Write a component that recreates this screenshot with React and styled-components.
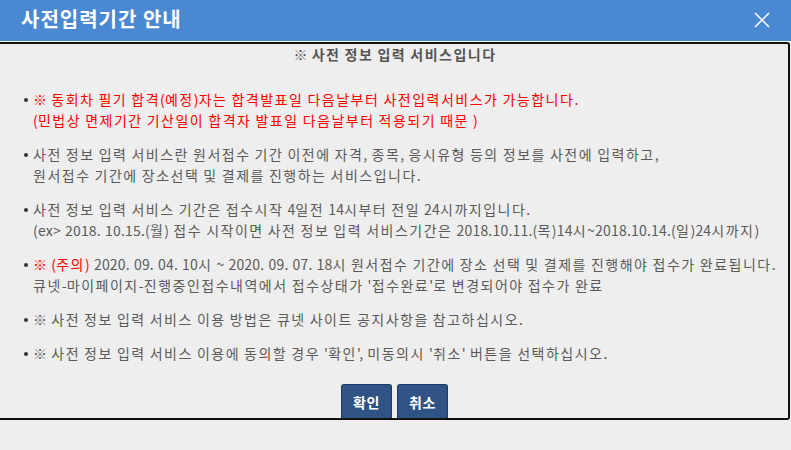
import React from "react";
import styled, { createGlobalStyle } from "styled-components";

const GlobalStyle = createGlobalStyle`
  html, body {
    margin: 0;
    padding: 0;
    background: #eeeeee;
  }
  body {
    font-family: "Noto Sans CJK KR", "Noto Sans", sans-serif;
  }
`;

const notices = [
  [
    [{ text: "※ 동회차 필기 합격(예정)자는 합격발표일 다음날부터 사전입력서비스가 가능합니다.", red: true }],
    [{ text: "(민법상 면제기간 기산일이 합격자 발표일 다음날부터 적용되기 때문 )", red: true }],
  ],
  [
    [{ text: "사전 정보 입력 서비스란 원서접수 기간 이전에 자격, 종목, 응시유형 등의 정보를 사전에 입력하고," }],
    [{ text: "원서접수 기간에 장소선택 및 결제를 진행하는 서비스입니다." }],
  ],
  [
    [{ text: "사전 정보 입력 서비스 기간은 접수시작 4일전 14시부터 전일 24시까지입니다." }],
    [{ text: "(ex> 2018. 10.15.(월) 접수 시작이면 사전 정보 입력 서비스기간은 2018.10.11.(목)14시~2018.10.14.(일)24시까지)" }],
  ],
  [
    [
      { text: "※ (주의)", red: true },
      { text: " 2020. 09. 04. 10시 ~ 2020. 09. 07. 18시 원서접수 기간에 장소 선택 및 결제를 진행해야 접수가 완료됩니다." },
    ],
    [{ text: "큐넷-마이페이지-진행중인접수내역에서 접수상태가 '접수완료'로 변경되어야 접수가 완료" }],
  ],
  [[{ text: "※ 사전 정보 입력 서비스 이용 방법은 큐넷 사이트 공지사항을 참고하십시오." }]],
  [[{ text: "※ 사전 정보 입력 서비스 이용에 동의할 경우 '확인', 미동의시 '취소' 버튼을 선택하십시오." }]],
];

// hangul syllables get a little extra tracking so the lines run as wide as the original
const Spaced = ({ text }) =>
  text.split(/([\uAC00-\uD7A3]+)/).map((run, i) =>
    i % 2 ? <Hangul key={i}>{run}</Hangul> : <React.Fragment key={i}>{run}</React.Fragment>
  );

const App = () => {
  return (
    <>
      <GlobalStyle />
      <Dialog>
        <Header>
          <Title>사전입력기간 안내</Title>
          <CloseButton aria-label="닫기">
            <svg width="16" height="16" viewBox="0 0 16 16">
              <path d="M1 1 L15 15 M15 1 L1 15" stroke="#ffffff" strokeWidth="1.5" fill="none" />
            </svg>
          </CloseButton>
        </Header>
        <Body>
          <Heading>
            <Spaced text="※ 사전 정보 입력 서비스입니다" />
          </Heading>
          <NoticeList>
            {notices.map((lines, i) => (
              <Notice key={i}>
                {lines.map((line, j) => (
                  <Line key={j}>
                    {line.map((part, k) => (
                      <Part key={k} $red={part.red}>
                        <Spaced text={part.text} />
                      </Part>
                    ))}
                  </Line>
                ))}
              </Notice>
            ))}
          </NoticeList>
          <Buttons>
            <Button>확인</Button>
            <Button>취소</Button>
          </Buttons>
        </Body>
      </Dialog>
    </>
  );
};

const Dialog = styled.div`
  width: 791px;
  height: 450px;
  background: #eeeeee;
`;

const Header = styled.div`
  height: 41px;
  background: #4a89d2;
  border-bottom: 1px solid #ffffff;
  display: flex;
  align-items: center;
  justify-content: space-between;
  padding: 0 21px;
`;

const Title = styled.h1`
  margin: 0 0 4px;
  font-size: 20px;
  font-weight: bold;
  color: #ffffff;
  letter-spacing: 1px;
`;

const CloseButton = styled.button`
  border: 0;
  background: transparent;
  padding: 0;
  margin: 0 0 2px;
  width: 16px;
  height: 16px;
  display: flex;
  cursor: pointer;
`;

const Body = styled.div`
  height: 374px;
  margin-right: 1px;
  border: 2px solid #111111;
  border-left: 0;
  border-radius: 0 3px 3px 0;
  background: #eeeeee;
  display: flex;
  flex-direction: column;
  color: #5a5a5a;
  font-size: 14px;
  letter-spacing: 0.2px;
  word-spacing: 0.7px;
`;

const Hangul = styled.span`
  letter-spacing: 1.5px;
`;

const Heading = styled.div`
  text-align: center;
  font-weight: bold;
  line-height: 20px;
  color: #555555;
  padding-left: 2px;
`;

const NoticeList = styled.ul`
  list-style: none;
  margin: 25px 0 0;
  padding: 0 0 0 33px;
  display: flex;
  flex-direction: column;
  gap: 13px;
`;

const Notice = styled.li`
  position: relative;
  line-height: 21px;
  &::before {
    content: "";
    position: absolute;
    left: -9px;
    top: 9px;
    width: 4px;
    height: 4px;
    border-radius: 50%;
    background: #333333;
  }
`;

const Line = styled.div`
  white-space: nowrap;
`;

const Part = styled.span`
  color: ${(p) => (p.$red ? "#ff0000" : "inherit")};
`;

const Buttons = styled.div`
  margin-top: auto;
  display: flex;
  justify-content: center;
  gap: 5px;
  padding-left: 1px;
`;

const Button = styled.button`
  width: 51px;
  height: 34px;
  padding: 0;
  border: 1px solid #1f3d63;
  border-bottom: 0;
  border-radius: 3px 3px 0 0;
  background: #2e5384;
  color: #ffffff;
  font-family: inherit;
  font-size: 14px;
  font-weight: bold;
  letter-spacing: 0.5px;
  cursor: pointer;
`;

export default App;
